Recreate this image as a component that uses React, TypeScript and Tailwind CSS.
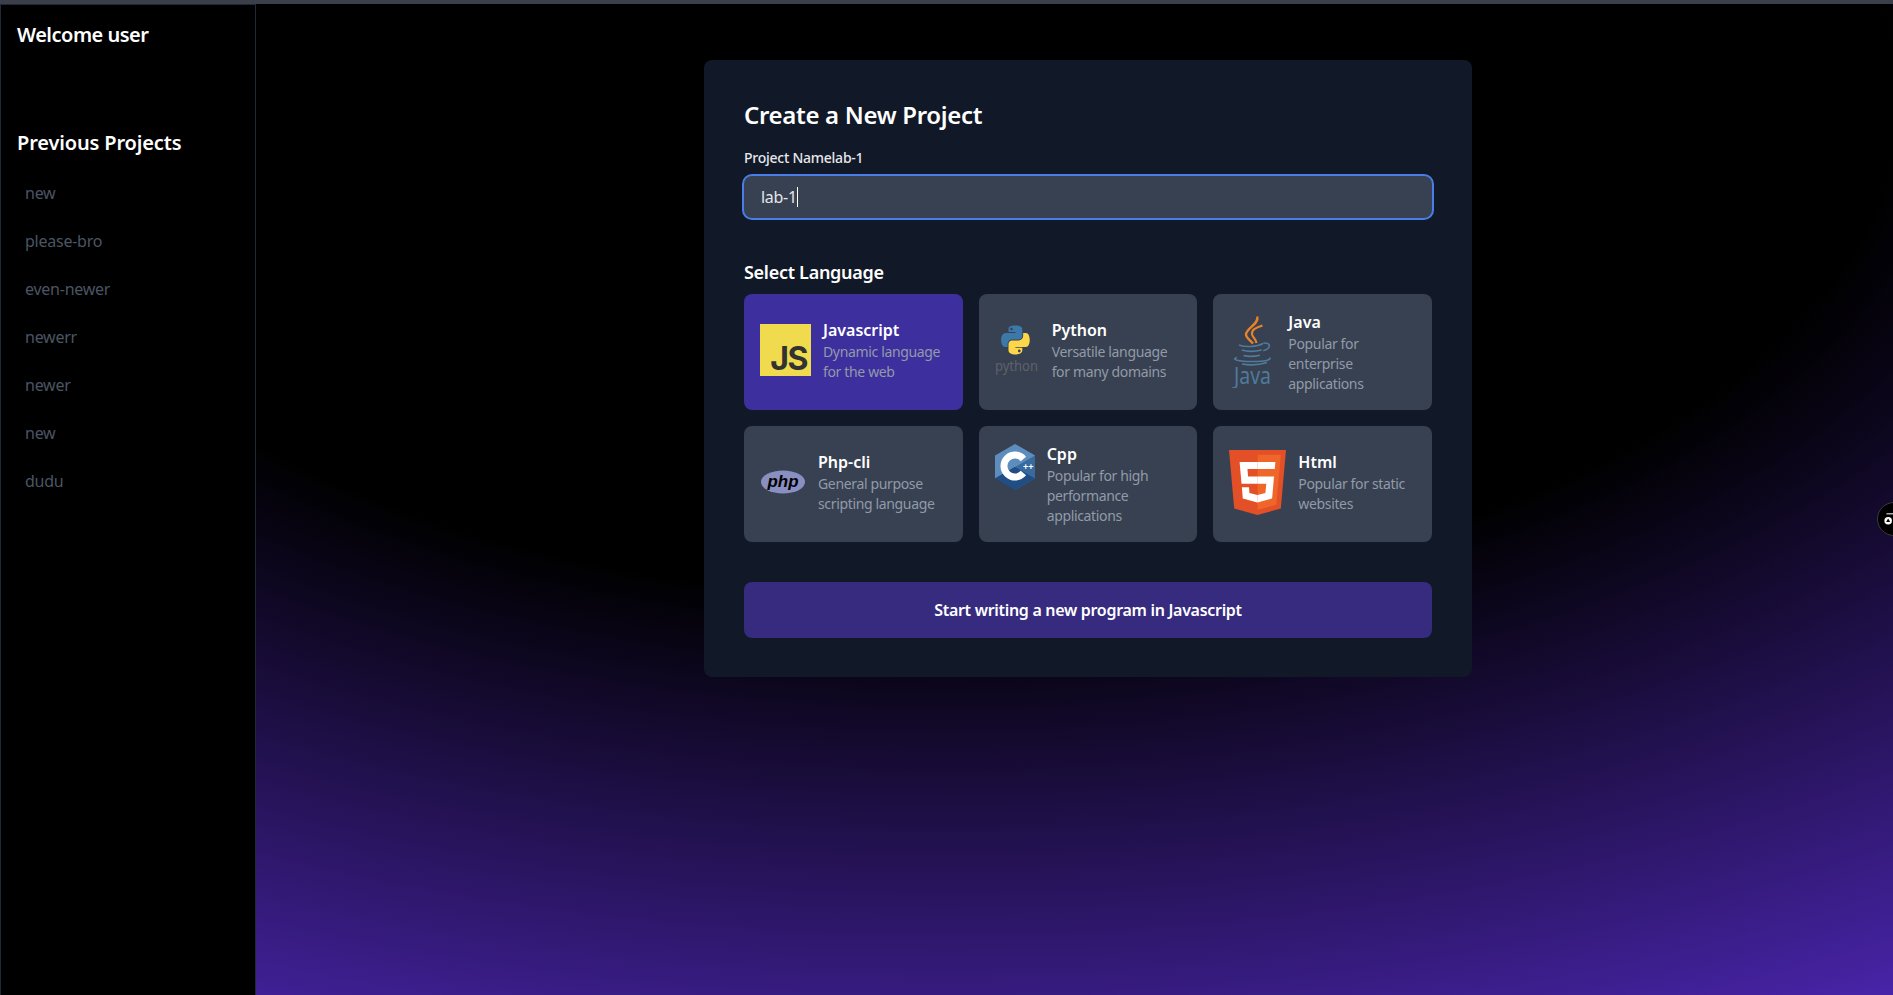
import React from "react";

const font = { fontFamily: '"Noto Sans", sans-serif' };

function JsLogo() {
  return (
    <div className="w-[51px] h-[52px] shrink-0 bg-[#f0db4f] flex items-end justify-end pr-[4px] pb-[1px]">
      <span className="font-['Inter'] text-[32px] leading-[32px] font-bold text-[#323330] tracking-[-1.5px]">JS</span>
    </div>
  );
}

function PythonLogo() {
  return (
    <svg viewBox="0 0 45 50" className="w-[45px] h-[50px] shrink-0">
      <g transform="translate(2.500 0) scale(0.28)">
        <path fill="#3c78a8" d="M63.391 1.988c-4.222.02-8.252.379-11.8 1.007-10.45 1.846-12.346 5.71-12.346 12.837v9.411h24.693v3.137H29.977c-7.176 0-13.46 4.313-15.426 12.521-2.268 9.405-2.368 15.275 0 25.096 1.755 7.311 5.947 12.519 13.124 12.519h8.491V67.234c0-8.151 7.051-15.34 15.426-15.34h24.665c6.866 0 12.346-5.654 12.346-12.548V15.833c0-6.693-5.646-11.72-12.346-12.837-4.244-.706-8.645-1.027-12.866-1.008zM50.037 9.557c2.55 0 4.634 2.117 4.634 4.721 0 2.593-2.083 4.69-4.634 4.69-2.56 0-4.633-2.097-4.633-4.69-.001-2.604 2.073-4.721 4.633-4.721z" />
        <path fill="#fdd64a" d="M91.682 28.38v10.966c0 8.5-7.208 15.655-15.426 15.655H51.591c-6.756 0-12.346 5.783-12.346 12.549v23.515c0 6.691 5.818 10.628 12.346 12.547 7.816 2.297 15.312 2.713 24.665 0 6.216-1.801 12.346-5.423 12.346-12.547v-9.412H63.938v-3.138h37.012c7.176 0 9.852-5.005 12.348-12.519 2.578-7.735 2.467-15.174 0-25.096-1.774-7.145-5.161-12.521-12.348-12.521h-9.268zM77.809 87.927c2.561 0 4.634 2.097 4.634 4.692 0 2.602-2.074 4.719-4.634 4.719-2.55 0-4.633-2.117-4.633-4.719 0-2.595 2.083-4.692 4.633-4.692z" />
      </g>
      <text x="0" y="46" fontSize="14" fill="#5f6268" fontFamily="Noto Sans, sans-serif" textLength="43" lengthAdjust="spacingAndGlyphs">python</text>
    </svg>
  );
}

function JavaLogo() {
  return (
    <svg viewBox="0 0 47 72" className="w-[47px] h-[72px] shrink-0">
      <g fill="none">
        <path d="M28.300 .5C30 8 18 12 17 18c-.5 3.500 4 6 7 9.500" stroke="#e8832a" strokeWidth="2.400" />
        <path d="M33.500 9.500C26 12 22.500 14 23 18c.3 3 4 5 4.500 9" stroke="#e8832a" strokeWidth="2.200" />
        <g stroke="#4f7c9c" strokeWidth="1.600">
          <path d="M10 29c6 2.500 18 2 24-1.500" />
          <path d="M12.700 34c5 1.500 14 1.500 20 0" />
          <path d="M14.500 39.500c4 1 11 1 16.500-.3" />
          <path d="M34.300 27.300c7-1.500 9 4.500 0 7.400" />
          <path d="M8 41.500c-7 2 2 4 15 4s20-1.500 17.500-4" />
          <path d="M13 48c7 1.200 17 1 25-1.500" />
        </g>
      </g>
      <text x="5" y="68" fontSize="24" fill="#4f7a9a" fontFamily="Noto Sans, sans-serif" textLength="37" lengthAdjust="spacingAndGlyphs">Java</text>
    </svg>
  );
}

function PhpLogo() {
  return (
    <svg viewBox="0 0 46 28" className="w-[46px] h-[28px] shrink-0">
      <ellipse cx="23" cy="14" rx="22" ry="11.500" fill="#8a8fc2" />
      <text x="23" y="19" textAnchor="middle" fontSize="16" fontStyle="italic" fontWeight="700" fill="#000" fontFamily="Liberation Sans, sans-serif" textLength="31" lengthAdjust="spacingAndGlyphs">php</text>
    </svg>
  );
}

function CppLogo() {
  return (
    <svg viewBox="0 0 40 46" className="w-[40px] h-[46px] shrink-0 self-start mt-[2px]">
      <polygon points="20,0 40,11.500 40,34.500 20,46" fill="#396a9f" />
      <polygon points="20,0 0,11.500 0,34.500 20,23" fill="#5c8dbc" />
      <polygon points="20,0 40,11.500 20,23" fill="#5c8dbc" />
      <polygon points="0,34.500 20,46 40,34.500 20,23" fill="#1f4d84" />
      <path d="M31.100 12.700A14.500 14.500 0 1 0 31.100 31.300L25.700 26.800A7.500 7.500 0 1 1 25.700 17.200Z" fill="#fff" />
      <text x="28" y="26" fontSize="9" fontWeight="700" fill="#fff" fontFamily="Liberation Sans, sans-serif">++</text>
    </svg>
  );
}

function HtmlLogo() {
  return (
    <svg viewBox="30 0 451 512" preserveAspectRatio="none" className="w-[57px] h-[65px] shrink-0">
      <path fill="#E34F26" d="M71 460 30 0h451l-41 460-185 52" />
      <path fill="#EF652A" d="M256 472 405 431 440 37H256" />
      <path fill="#fff" d="M256 208h-75l-5-58h80V94H114l1 15 14 156h127zM256 355h-1l-63-17-4-45h-56l7 89 116 32h1z" />
      <path fill="#fff" d="M255 208v57h70l-7 73-63 17v59l116-32 1-10 13-149 2-15h-16zM255 94v56h137l1-12 3-29 1-15z" />
    </svg>
  );
}

const langs = [
  { name: "Javascript", desc: "Dynamic language for the web", logo: <JsLogo />, active: true, lift: true },
  { name: "Python", desc: "Versatile language for many domains", logo: <PythonLogo />, lift: true },
  { name: "Java", desc: "Popular for enterprise applications", logo: <JavaLogo /> },
  { name: "Php-cli", desc: "General purpose scripting language", logo: <PhpLogo />, lift: true },
  { name: "Cpp", desc: "Popular for high performance applications", logo: <CppLogo /> },
  { name: "Html", desc: "Popular for static websites", logo: <HtmlLogo />, lift: true },
];

const projects = ["new", "please-bro", "even-newer", "newerr", "newer", "new", "dudu"];

export default function App() {
  return (
    <div style={font} className="relative h-[995px] w-full overflow-hidden flex flex-col bg-[radial-gradient(125%_125%_at_50%_10%,#000_40%,#63e_100%)]">
      <div className="h-[4px] shrink-0 bg-[#3b3f4a]" />
      <div className="flex flex-1 min-h-0">
        <aside className="w-[256px] shrink-0 bg-black border-x border-t border-[#1f2937] px-4 pt-[14px]">
          <h2 className="text-[20px] leading-[32px] font-semibold text-white tracking-[-0.5px]">Welcome user</h2>
          <h2 className="mt-[76px] text-[20px] leading-[32px] font-semibold text-white tracking-[-0.15px]">Previous Projects</h2>
          <ul className="mt-[10px]">
            {projects.map((p, i) => (
              <li key={i} className="h-[48px] flex items-center px-2 text-[16px] text-[#4b5563] tracking-[-0.25px]">{p}</li>
            ))}
          </ul>
        </aside>
        <main className="flex-1 pl-[448px] pt-[56px]">
          <div className="w-[768px] h-[617px] bg-[#111827] rounded-lg p-10">
            <h1 className="-mt-[1px] text-[24px] leading-[32px] font-semibold text-white tracking-[-0.32px]">Create a New Project</h1>
            <div className="mt-[17px] text-[14px] leading-[20px] font-medium text-[#e5e7eb] tracking-[-0.25px]">Project Namelab-1</div>
            <div className="mt-[8px] h-[42px] rounded-lg bg-[#374151] ring-2 ring-[#4a7de8] flex items-center px-[17px] text-[16px] text-[#e5e7eb] tracking-[-0.3px]">
              lab-1<span className="w-px h-[20px] bg-white" />
            </div>
            <h3 className="mt-[40px] text-[18px] leading-[28px] font-semibold text-white tracking-[-0.28px]">Select Language</h3>
            <div className="mt-[8px] grid grid-cols-3 gap-4">
              {langs.map((l) => (
                <div key={l.name} className={`h-[116px] rounded-lg px-4 pt-4 flex items-center gap-3 ${l.lift ? "pb-5" : "pb-4"} ${l.active ? "bg-[#3e2f9f]" : "bg-[#374151]"}`}>
                  {l.logo}
                  <div>
                    <div className="text-[16px] leading-[24px] font-semibold text-white">{l.name}</div>
                    <div className="text-[14px] leading-[20px] text-[#929aa8] tracking-[-0.35px]">{l.desc}</div>
                  </div>
                </div>
              ))}
            </div>
            <button className="mt-[40px] w-full h-[56px] rounded-lg bg-[#372b7f] text-[16px] font-semibold text-white tracking-[-0.3px]">
              Start writing a new program in Javascript
            </button>
          </div>
        </main>
      </div>
      <div className="absolute left-[1877px] top-[502px] w-[34px] h-[34px] rounded-full bg-black border border-[#3a3a3a] flex items-center pl-[6px]">
        <svg viewBox="0 0 12 14" className="w-[10px] h-[12px]">
          <rect x="3" y="0" width="8" height="1.500" fill="#ccc" />
          <circle cx="5" cy="9" r="4.500" fill="#fff" />
          <path d="M5 6.500 7.500 10.500H2.500Z" fill="#000" />
        </svg>
      </div>
    </div>
  );
}
